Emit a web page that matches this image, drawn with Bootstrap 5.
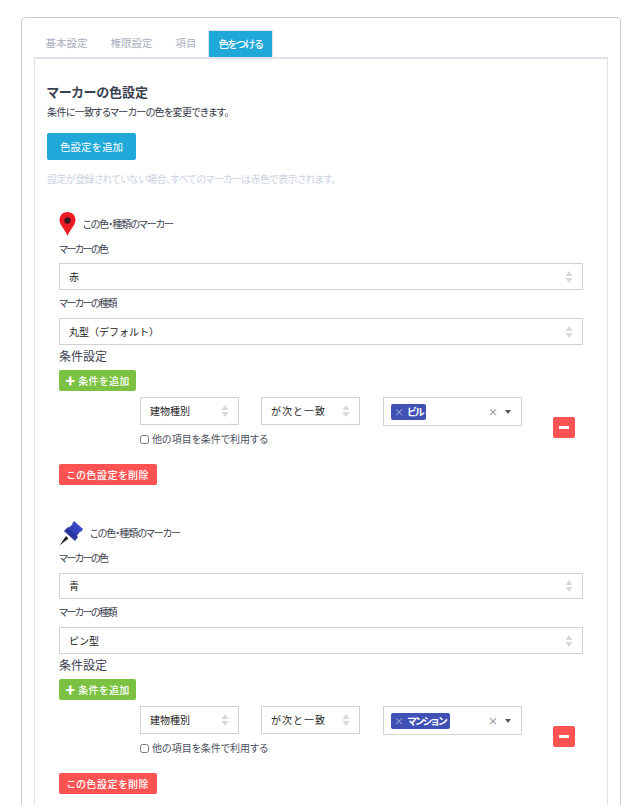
<!DOCTYPE html>
<html lang="ja"><head><meta charset="utf-8"><title>マーカーの色設定</title>
<link rel="stylesheet" href="https://cdn.jsdelivr.net/npm/bootstrap@5.3.0/dist/css/bootstrap.min.css">
<style>
html,body{height:805px;overflow:hidden}
body{background:#fff;font-family:"Noto Sans CJK JP","Noto Sans",sans-serif;font-size:10px;color:#3c4250;font-feature-settings:"palt";padding:17px 22px 0 21px;line-height:1.4}
.shell{border:1px solid #ccc;border-radius:4px 4px 0 0;padding:12px 12px 0;height:820px}
.tabstrip{display:flex;height:27px;border:0;padding-left:0}
.tabstrip li{display:flex}
.tabstrip a{display:flex;align-items:center;padding:0 11.5px;color:#a9aebd;text-decoration:none;font-size:10.5px;font-feature-settings:normal}
.tabstrip a.on{background:#1fa8d8;color:#fff;font-weight:500;border:1px solid #dfe3ee;border-bottom:0;margin-left:0;width:65px;justify-content:center;padding:0;letter-spacing:-1.7px}
.tabbody{border:1px solid #e2e2ec;border-top-width:2px;padding:24px 12px 0;height:780px}
.ttl{font-size:13px;font-weight:700;color:#3a4150;line-height:18px;margin:0}
.sub{line-height:14px;margin:4px 0 14px;letter-spacing:-.6px;color:#333a48}
.addmain{background:#1fa8d8;color:#fff;border:0;border-radius:2px;width:89px;height:27px;font-size:10.5px;padding:0;display:block}
.hint{color:#ccd2e2;line-height:14px;margin:12px 0 0;letter-spacing:-.55px}
.blk{padding:0 12px 0 12px}
.mk{display:flex;align-items:center;gap:7px;height:24px;letter-spacing:-1px}
.mk svg{display:block}
.lbl{line-height:14px;margin:0;letter-spacing:-1.5px}
.fake{border:1px solid #d2d2d2;background:#fff;display:flex;align-items:center;justify-content:space-between;color:#222;padding:0 9px;font-feature-settings:normal}
.wide{height:27px;margin-top:7px}
.cond{font-size:12px;line-height:16px;margin:3px 0 6px;color:#3c4250;font-feature-settings:normal}
.act{display:block;color:#fff;border:0;border-radius:2px;padding:0;font-size:10px;font-weight:500;height:21px;font-feature-settings:normal;letter-spacing:.3px}
.grn{background:#7bc142;width:77px}
.red{background:#ff5252;width:98px;font-feature-settings:"palt";letter-spacing:.6px}
.crow{margin-left:81px;position:relative;width:383px;padding-top:6px}
.crow .gp{display:flex;gap:22px}
.s1{width:99px;height:28px}
.s2{width:139px;height:29px;padding:0 10px 0 7px;margin-left:1px}
.tag{background:#3f51b5;color:#fff;border-radius:2px;height:16px;display:flex;align-items:center;padding:0 4px 0 3px;gap:3px;font-weight:700;font-size:10px;letter-spacing:-2.3px}
.tag i{font-style:normal;color:#a8b0dc;font-weight:400;letter-spacing:0;line-height:16px}
.end{display:flex;align-items:center;gap:7px;color:#777}
.tri{width:0;height:0;border:3px solid transparent;border-top:4px solid #555;border-bottom:0}
.minus{position:absolute;left:413px;top:26px;width:22px;height:21px;background:#ff5252;border:0;border-radius:2px;padding:0;display:flex;align-items:center;justify-content:center}
.minus span{width:10px;height:3px;background:#fff;display:block}
.chk{display:flex;align-items:center;gap:3px;height:14px;margin:6px 0 0;color:#4a5060}
.chk input{margin:0;width:9px;height:9px}
.sepdel{margin:18px 0 0}
.second{margin-top:35px}
.wide2{letter-spacing:1px}
</style></head><body>
<div class="shell">
 <ul class="tabstrip list-unstyled mb-0">
  <li><a href="#">基本設定</a></li><li><a href="#">権限設定</a></li><li><a href="#">項目</a></li><li><a class="on" href="#">色をつける</a></li>
 </ul>
 <div class="tabbody">
  <h5 class="ttl">マーカーの色設定</h5>
  <p class="sub">条件に一致するマーカーの色を変更できます。</p>
  <button class="btn addmain">色設定を追加</button>
  <p class="hint">設定が登録されていない場合、すべてのマーカーは赤色で表示されます。</p>

  <div class="blk" style="margin-top:26px">
   <div class="mk">
    <svg width="17" height="24" viewBox="0 0 17 24"><path d="M8.5 0C3.800 0 .5 3.600.5 8c0 3.800 2.500 6.500 4.500 9.500 1.500 2.200 2.700 4.500 3.500 6.500.8-2 2-4.300 3.500-6.500 2-3 4.500-5.700 4.500-9.500C16.500 3.600 13.200 0 8.500 0z" fill="#ee1c25"/><circle cx="8.500" cy="8.500" r="3.200" fill="#3a1a20"/></svg>
    <span>この色・種類のマーカー</span>
   </div>
   <p class="lbl" style="margin-top:6px">マーカーの色</p>
   <div class="fake wide"><span>赤</span><svg width="8" height="12" viewBox="0 0 8 12"><path d="M4 0l3.500 5H.5zM4 12L.5 7h7z" fill="#d8d8d8"/></svg></div>
   <p class="lbl" style="margin-top:6px">マーカーの種類</p>
   <div class="fake wide" style="margin-top:8px"><span>丸型（デフォルト）</span><svg width="8" height="12" viewBox="0 0 8 12"><path d="M4 0l3.500 5H.5zM4 12L.5 7h7z" fill="#d8d8d8"/></svg></div>
   <p class="cond">条件設定</p>
   <button class="btn act grn"><b>✚</b> 条件を追加</button>
   <div class="crow">
    <div class="gp">
     <div class="fake s1"><span>建物種別</span><svg width="8" height="12" viewBox="0 0 8 12"><path d="M4 0l3.500 5H.5zM4 12L.5 7h7z" fill="#d8d8d8"/></svg></div>
     <div class="fake s1"><span class="wide2">が次と一致</span><svg width="8" height="12" viewBox="0 0 8 12"><path d="M4 0l3.500 5H.5zM4 12L.5 7h7z" fill="#d8d8d8"/></svg></div>
     <div class="fake s2"><span class="tag"><i>×</i>ビル</span><span class="end"><span>×</span><span class="tri"></span></span></div>
    </div>
    <label class="chk"><input type="checkbox"><span>他の項目を条件で利用する</span></label>
    <button class="minus"><span></span></button>
   </div>
   <button class="btn act red sepdel">この色設定を削除</button>
  </div>

  <div class="blk second">
   <div class="mk" style="height:26px">
    <svg width="24" height="26" viewBox="0 0 24 26"><path d="M7 16l2.500 2.500L.5 25.500z" fill="#222"/><path d="M15 1l9 8-2 3-9-8z" fill="#3a48c4"/><path d="M14 4l7.500 7-4.500 6-9-8z" fill="#3340b8"/><path d="M9 7l10 10-3 4L5 11z" fill="#2a359e"/></svg>
    <span>この色・種類のマーカー</span>
   </div>
   <p class="lbl" style="margin-top:5px">マーカーの色</p>
   <div class="fake wide" style="height:26px;margin-top:8px"><span>青</span><svg width="8" height="12" viewBox="0 0 8 12"><path d="M4 0l3.500 5H.5zM4 12L.5 7h7z" fill="#d8d8d8"/></svg></div>
   <p class="lbl" style="margin-top:6px">マーカーの種類</p>
   <div class="fake wide" style="margin-top:8px"><span>ピン型</span><svg width="8" height="12" viewBox="0 0 8 12"><path d="M4 0l3.500 5H.5zM4 12L.5 7h7z" fill="#d8d8d8"/></svg></div>
   <p class="cond">条件設定</p>
   <button class="btn act grn"><b>✚</b> 条件を追加</button>
   <div class="crow">
    <div class="gp">
     <div class="fake s1"><span>建物種別</span><svg width="8" height="12" viewBox="0 0 8 12"><path d="M4 0l3.500 5H.5zM4 12L.5 7h7z" fill="#d8d8d8"/></svg></div>
     <div class="fake s1"><span class="wide2">が次と一致</span><svg width="8" height="12" viewBox="0 0 8 12"><path d="M4 0l3.500 5H.5zM4 12L.5 7h7z" fill="#d8d8d8"/></svg></div>
     <div class="fake s2"><span class="tag"><i>×</i>マンション</span><span class="end"><span>×</span><span class="tri"></span></span></div>
    </div>
    <label class="chk"><input type="checkbox"><span>他の項目を条件で利用する</span></label>
    <button class="minus"><span></span></button>
   </div>
   <button class="btn act red sepdel">この色設定を削除</button>
  </div>
 </div>
</div>
<script src="https://cdn.jsdelivr.net/npm/bootstrap@5.3.0/dist/js/bootstrap.bundle.min.js"></script>
</body></html>
